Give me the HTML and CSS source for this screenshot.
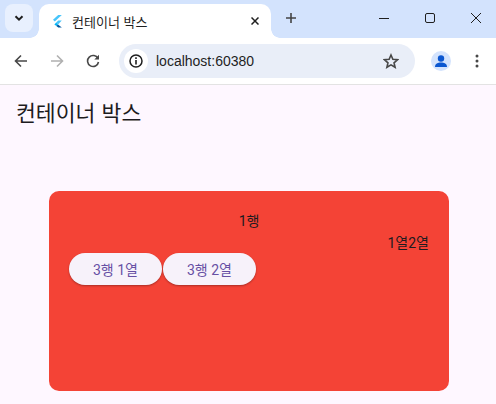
FILE: index.html
```html
<!DOCTYPE html>
<html lang="ko">
<head>
    <meta charset="UTF-8">
    <meta name="viewport" content="width=device-width, initial-scale=1.0">
    <title>컨테이너 박스</title>
    <link rel="stylesheet" href="styles.css">
</head>
<body>
    <div class="tabstrip">
        <div class="tab-search">
            <svg width="12" height="12" viewBox="0 0 12 12"><path d="M2.500 4.200 6 7.700l3.500-3.500" fill="none" stroke="#1f1f1f" stroke-width="2"/></svg>
        </div>
        <div class="tab">
            <svg class="favicon" width="16" height="16" viewBox="0 0 16 16">
                <path d="M9.200 2h3.600L5.800 8.600 4 6.800z" fill="#47c5fb"/>
                <path d="M9.200 7.600h3.600L9 11.400l-1.800-1.800z" fill="#47c5fb"/>
                <path d="M7.200 9.600 9 11.400 7.400 13 5.400 11.400z" fill="#00b5f8"/>
                <path d="M9 11.400 12.800 14.500H9.200L7.400 13z" fill="#00569e"/>
            </svg>
            <span class="tab-title">컨테이너 박스</span>
            <svg class="tab-close" width="8" height="8" viewBox="0 0 8 8"><path d="M.5.500l7 7M7.500.500l-7 7" stroke="#1f1f1f" stroke-width="1.500"/></svg>
        </div>
        <svg class="new-tab" width="10" height="10" viewBox="0 0 10 10"><path d="M5 0v10M0 5h10" stroke="#444" stroke-width="1.600"/></svg>
        <div class="win-buttons">
            <svg width="10" height="10" viewBox="0 0 10 10"><path d="M0 5.500h10" stroke="#1f1f1f" stroke-width="1"/></svg>
            <svg width="10" height="10" viewBox="0 0 10 10"><rect x=".5" y=".5" width="9" height="9" rx="1.500" fill="none" stroke="#1f1f1f"/></svg>
            <svg width="10" height="10" viewBox="0 0 10 10"><path d="M0 0l10 10M10 0 0 10" stroke="#1f1f1f" stroke-width="1"/></svg>
        </div>
    </div>

    <div class="toolbar">
        <svg class="nav-icon" width="14" height="14" viewBox="0 0 14 14"><path d="M13 7H2M7 1.500 1.500 7 7 12.500" fill="none" stroke="#474747" stroke-width="1.600"/></svg>
        <svg class="nav-icon" width="14" height="14" viewBox="0 0 14 14"><path d="M1 7h11M7 1.500 12.500 7 7 12.500" fill="none" stroke="#b0b0b0" stroke-width="1.600"/></svg>
        <svg class="nav-icon" width="14" height="14" viewBox="0 0 14 14"><path d="M12 4.500A5.500 5.500 0 1 0 12.500 8" fill="none" stroke="#474747" stroke-width="1.600"/><path d="M13 .8v4.700H8.300z" fill="#474747"/></svg>
        <div class="omnibox">
            <div class="site-info">
                <svg width="14" height="14" viewBox="0 0 14 14"><circle cx="7" cy="7" r="6" fill="none" stroke="#1f1f1f" stroke-width="1.500"/><path d="M7 6v4.500" stroke="#1f1f1f" stroke-width="1.600"/><path d="M7 3.300v1.600" stroke="#1f1f1f" stroke-width="1.600"/></svg>
            </div>
            <span class="url">localhost:60380</span>
            <svg class="star" width="16" height="16" viewBox="0 0 18 17"><path d="M9 1.800l2.100 4.800 5.200.5-3.900 3.400 1.200 5.100L9 12.900l-4.600 2.700 1.200-5.100-3.900-3.400 5.200-.5z" fill="none" stroke="#474747" stroke-width="1.800"/></svg>
        </div>
        <svg class="avatar" width="20" height="20" viewBox="0 0 20 20"><circle cx="10" cy="10" r="10" fill="#d3e3fd"/><circle cx="10" cy="7.500" r="3.200" fill="#0b57d0"/><path d="M4 16c0-3.500 3-4.500 6-4.500s6 1 6 4.500z" fill="#0b57d0"/></svg>
        <svg class="menu" width="4" height="14" viewBox="0 0 4 14"><circle cx="2" cy="2" r="1.500" fill="#474747"/><circle cx="2" cy="7" r="1.500" fill="#474747"/><circle cx="2" cy="12" r="1.500" fill="#474747"/></svg>
    </div>

    <div class="page">
        <h1 class="app-title">컨테이너 박스</h1>
        <div class="red-box">
            <div class="row-one">1행</div>
            <div class="row-two">1열2열</div>
            <div class="row-three">
                <button class="pill">3행 1열</button>
                <button class="pill">3행 2열</button>
            </div>
        </div>
    </div>
</body>
</html>
```

FILE: styles.css
```css
html, body {
    margin: 0;
    height: 100%;
    overflow: hidden;
}
body {
    font-family: Roboto, "Noto Sans CJK KR", sans-serif;
    background-color: #fef7ff;
    color: #1d1b20;
}

/* browser frame */
.tabstrip {
    height: 38px;
    background-color: #d3e3fd;
    display: flex;
    align-items: flex-start;
}
.tab-search {
    width: 28px;
    height: 28px;
    margin: 4px 0 0 5px;
    border-radius: 8px;
    background-color: #e8f0fe;
    display: flex;
    align-items: center;
    justify-content: center;
}
.tab {
    width: 232px;
    height: 34px;
    margin: 4px 0 0 6px;
    background-color: #fff;
    border-radius: 10px 10px 0 0;
    display: flex;
    align-items: center;
    padding: 0 12px 0 10px;
    box-sizing: border-box;
    position: relative;
}
/* flared corners at the foot of the active tab */
.tab::before, .tab::after {
    content: "";
    position: absolute;
    bottom: 0;
    width: 9px;
    height: 9px;
}
.tab::before {
    left: -9px;
    background: radial-gradient(circle at 0 0, transparent 8.500px, #fff 9px);
}
.tab::after {
    right: -9px;
    background: radial-gradient(circle at 100% 0, transparent 8.500px, #fff 9px);
}
.favicon {
    flex: none;
}
.tab-title {
    font-family: "Noto Sans CJK KR", sans-serif;
    font-size: 13px;
    color: #1f1f1f;
    margin-left: 7px;
    flex: 1;
}
.tab-close {
    flex: none;
}
.new-tab {
    margin: 13px 0 0 15px;
}
.win-buttons {
    margin-left: 83px;
    padding-top: 13px;
    display: flex;
    gap: 36px;
}
.toolbar {
    height: 47px;
    box-sizing: border-box;
    background-color: #fff;
    border-bottom: 1px solid #e3e3e3;
    display: flex;
    align-items: center;
    padding-left: 14px;
}
.nav-icon {
    flex: none;
    margin-right: 22px;
}
.nav-icon:nth-child(3) {
    margin-right: 19px;
}
.omnibox {
    width: 296px;
    height: 34px;
    border-radius: 17px;
    background-color: #e9eef8;
    display: flex;
    align-items: center;
    flex: none;
    padding: 0 16px 0 5px;
    box-sizing: border-box;
}
.site-info {
    width: 24px;
    height: 24px;
    border-radius: 50%;
    background-color: #fff;
    display: flex;
    align-items: center;
    justify-content: center;
}
.url {
    font-family: "Liberation Sans", sans-serif;
    font-size: 14px;
    color: #1f1f1f;
    margin-left: 8px;
    flex: 1;
}
.avatar {
    margin-left: 16px;
    flex: none;
}
.menu {
    margin-left: 24px;
    flex: none;
}

/* flutter page */
.page {
    padding-top: 12px;
}
.app-title {
    font-family: "Noto Sans CJK KR", sans-serif;
    font-size: 21.600px;
    font-weight: 400;
    line-height: 30px;
    margin: 0 0 0 16px;
}
.red-box {
    width: 400px;
    height: 200px;
    margin: 64px 0 0 49px;
    padding: 20px;
    box-sizing: border-box;
    background-color: #f44336;
    border-radius: 10px;
    font-size: 14px;
}
.row-one {
    text-align: center;
    line-height: 20px;
}
.row-two {
    text-align: right;
    line-height: 20px;
    margin-top: 2px;
}
.row-three {
    display: flex;
    gap: 1px;
}
.pill {
    width: 93px;
    height: 32px;
    border: none;
    border-radius: 16px;
    background-color: #f7f2fa;
    color: #6750a4;
    font-family: inherit;
    font-size: 14px;
    padding: 0;
    box-shadow: 0 1px 2px rgba(0, 0, 0, 0.3);
}
```
